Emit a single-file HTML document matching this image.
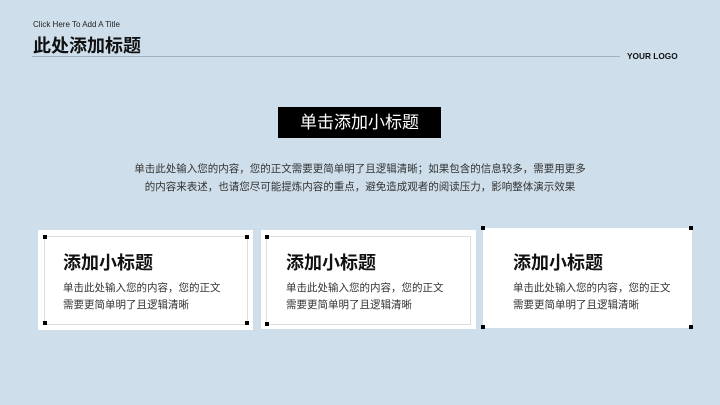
<html><head><style>
body{margin:0;width:720px;height:405px;background:#cedfeb;position:relative;overflow:hidden;font-family:"Liberation Sans","Noto Sans CJK SC",sans-serif}
.a{position:absolute}
.d{position:absolute;width:4px;height:4px;background:#000}
.c{position:absolute;background:#fff}
.h{position:absolute;font-size:18px;font-weight:bold;color:#111;white-space:nowrap}
.t{position:absolute;font-size:10.5px;line-height:17px;color:#333;white-space:nowrap}
</style></head><body>
<div class="a" style="left:33px;top:20px;font-size:8px;color:#222">Click Here To Add A Title</div>
<div class="a" style="left:33px;top:32px;font-size:18px;font-weight:bold;color:#111">此处添加标题</div>
<div class="a" style="left:32px;top:56px;width:588px;height:1px;background:#9fb2c2"></div>
<div class="a" style="left:627px;top:51px;font-size:8.3px;font-weight:bold;color:#111">YOUR LOGO</div>
<div class="a" style="left:278px;top:107px;width:163px;height:31px;background:#000;color:#fff;font-size:17px;line-height:31px;text-align:center">单击添加小标题</div>
<div class="a" style="left:0;width:720px;top:160px;text-align:center;font-size:10.5px;line-height:18px;color:#333">单击此处输入您的内容，您的正文需要更简单明了且逻辑清晰；如果包含的信息较多，需要用更多<br>的内容来表述，也请您尽可能提炼内容的重点，避免造成观者的阅读压力，影响整体演示效果</div>

<div class="c" style="left:38px;top:230px;width:215px;height:100px"></div>
<div class="a" style="left:44px;top:236px;width:202px;height:87px;border:1px solid #ddd"></div>
<div class="d" style="left:43px;top:235px"></div><div class="d" style="left:245px;top:235px"></div>
<div class="d" style="left:43px;top:321px"></div><div class="d" style="left:245px;top:321px"></div>
<div class="h" style="left:63px;top:249px">添加小标题</div>
<div class="t" style="left:63px;top:280px">单击此处输入您的内容，您的正文<br>需要更简单明了且逻辑清晰</div>

<div class="c" style="left:261px;top:230px;width:215px;height:99px"></div>
<div class="a" style="left:266px;top:236px;width:203px;height:87px;border:1px solid #ddd"></div>
<div class="d" style="left:265px;top:235px"></div><div class="d" style="left:265px;top:322px"></div>
<div class="h" style="left:286px;top:249px">添加小标题</div>
<div class="t" style="left:286px;top:280px">单击此处输入您的内容，您的正文<br>需要更简单明了且逻辑清晰</div>

<div class="c" style="left:483px;top:228px;width:209px;height:100px"></div>
<div class="d" style="left:481px;top:226px"></div><div class="d" style="left:689px;top:226px"></div>
<div class="d" style="left:481px;top:325px"></div><div class="d" style="left:689px;top:325px"></div>
<div class="h" style="left:513px;top:249px">添加小标题</div>
<div class="t" style="left:513px;top:280px">单击此处输入您的内容，您的正文<br>需要更简单明了且逻辑清晰</div>
</body></html>
